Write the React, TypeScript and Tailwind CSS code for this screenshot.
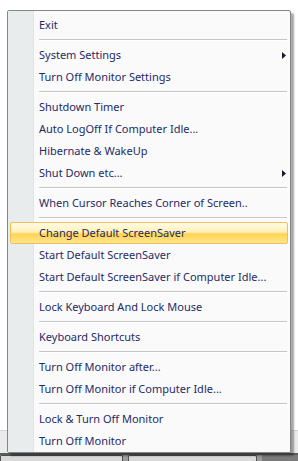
type Entry = { label: string; sub?: boolean; active?: boolean } | "sep";

const entries: Entry[] = [
  { label: "Exit" },
  "sep",
  { label: "System Settings", sub: true },
  { label: "Turn Off Monitor Settings" },
  "sep",
  { label: "Shutdown Timer" },
  { label: "Auto LogOff If Computer Idle..." },
  { label: "Hibernate & WakeUp" },
  { label: "Shut Down etc...", sub: true },
  "sep",
  { label: "When Cursor Reaches Corner of Screen.." },
  "sep",
  { label: "Change Default ScreenSaver", active: true },
  { label: "Start Default ScreenSaver" },
  { label: "Start Default ScreenSaver if Computer Idle..." },
  "sep",
  { label: "Lock Keyboard And Lock Mouse" },
  "sep",
  { label: "Keyboard Shortcuts" },
  "sep",
  { label: "Turn Off Monitor after..." },
  { label: "Turn Off Monitor if Computer Idle..." },
  "sep",
  { label: "Lock & Turn Off Monitor" },
  { label: "Turn Off Monitor" },
];

function Arrow() {
  return (
    <svg width="4" height="7" viewBox="0 0 4 7" className="mr-[4px]">
      <path d="M0 0 L4 3.5 L0 7 Z" fill="#1b1b2e" />
    </svg>
  );
}

function Item({ label, sub, active }: { label: string; sub?: boolean; active?: boolean }) {
  if (active) {
    return (
      <div className="flex h-[22px] items-stretch px-[2px]">
        <div className="flex flex-1 items-center rounded-[2px] border border-[#efbf5c] bg-[linear-gradient(to_bottom,#fffbe6_0%,#fff0b8_45%,#ffd452_55%,#ffe48a_100%)] pl-[28px] text-[#1e2a66]">
          {label}
        </div>
      </div>
    );
  }
  return (
    <div className="flex h-[22px] items-center justify-between pl-[31px] text-[#1e2a66]">
      <span>{label}</span>
      {sub && <Arrow />}
    </div>
  );
}

export default function App() {
  return (
    <div className="relative h-[461px] w-[298px] overflow-hidden bg-white font-['Noto_Sans',sans-serif] text-[11px]">
      {/* desktop behind the menu */}
      <div className="flex h-full flex-col">
        <div className="h-[430px] bg-white" />
        <div className="h-[23px] border-t border-[#d6d6d6] bg-[#ebebeb]" />
        <div className="flex h-[8px] gap-[5px] border-t-2 border-[#5c5c5c] bg-[#9c9c9c]">
          <div className="w-[123px] rounded-t-[2px] border border-b-0 border-[#4f4f4f] bg-[#d9d9d9]" />
          <div className="w-[129px] rounded-t-[2px] border border-b-0 border-[#4f4f4f] bg-[#d9d9d9]" />
          <div className="flex-1 bg-[#7b7b7b]" />
        </div>
      </div>

      {/* context menu */}
      <div className="absolute left-[7px] top-[10px] flex h-[443px] w-[284px] rounded-[2px] border border-[#868686] bg-[#fafafa] shadow-[3px_3px_2px_rgba(0,0,0,0.35)]">
        <div className="absolute bottom-0 left-0 top-0 w-[26px] border-r border-[#e2e3e3] bg-[#e9ecec]" />
        <div className="relative flex w-full flex-col pt-[3px]">
          {entries.map((e, i) =>
            e === "sep" ? (
              <div key={i} className="flex h-[8px] items-center pl-[31px] pr-[3px]">
                <div className="h-[2px] w-full border-t border-[#c5c5c5] bg-white" />
              </div>
            ) : (
              <Item key={i} label={e.label} sub={e.sub} active={e.active} />
            )
          )}
        </div>
      </div>
    </div>
  );
}
